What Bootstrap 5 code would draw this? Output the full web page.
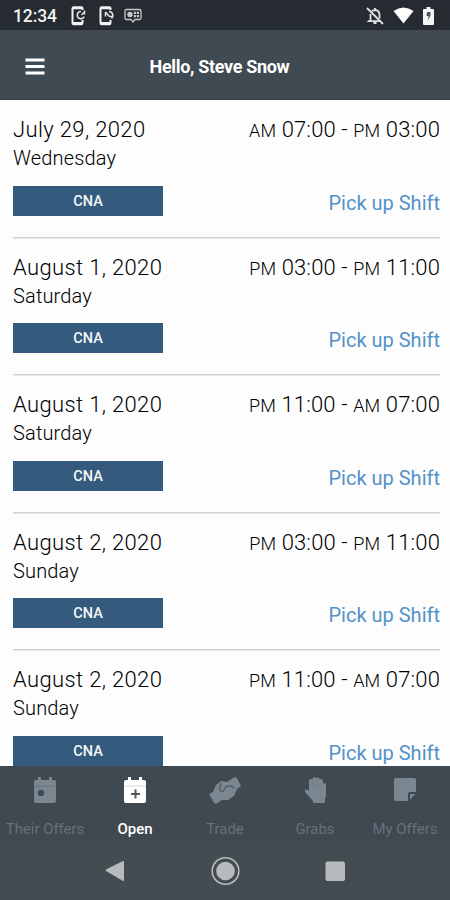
<!DOCTYPE html>
<html lang="en">
<head>
<meta charset="utf-8">
<meta name="viewport" content="width=device-width, initial-scale=1">
<title>Open Shifts</title>
<link href="https://cdn.jsdelivr.net/npm/bootstrap@5.3.0/dist/css/bootstrap.min.css" rel="stylesheet">
<style>
body{font-family:Roboto,"Liberation Sans",sans-serif;background:#fdfdfd;color:#222;height:900px;overflow:hidden}
svg{flex-shrink:0}
.status-bar{height:30px;background:#262b31;color:#f1f2f3;padding:1px 16px 0 13px}
.clock{font-size:17.5px;font-weight:500;letter-spacing:-.1px;line-height:30px;width:58px}
.note-icons{gap:12.5px}
.note-icons svg:last-child{margin-left:-2px}
.state-icons{gap:9px}
.app-bar{height:70px;background:#404a52;color:#fff;border-bottom:1px solid #394148;padding:3px 36px 0 25px}
.app-title{font-size:18px;font-weight:700;letter-spacing:-.33px}
.bar-side{width:20px}
.shift-list{height:666px;padding:0 10px 0 13px}
.shift{height:137.5px;padding-top:15.4px;border-bottom:1.5px solid #cfcfcf;box-shadow:0 1px 0 #e9e9e9}
.shift-date,.shift-time{font-size:22px;line-height:30px;font-weight:300;color:#000;white-space:nowrap}
.shift-date{letter-spacing:.36px}
.shift-time{letter-spacing:.15px}
.shift-time small{font-size:18px;font-weight:300;line-height:1}
.shift-day{font-size:20px;line-height:26px;font-weight:300;color:#000;letter-spacing:.15px}
.role-btn,.role-btn:hover{width:150px;height:30px;margin-top:14.6px;padding-top:1px!important;background:#345b7d;color:#f4f6f8;font-size:14.5px;font-weight:500}
.pick-link{font-size:20px;color:#5492c9;line-height:30px;margin-top:42.6px}
.tab-strip{height:75px;background:#404850;color:#65717b}
.tab-item{width:90px;font-size:15px;letter-spacing:-.05px;color:inherit;padding-top:10px;white-space:nowrap}
.tab-item span{line-height:20px;margin-top:13px}
.tab-item svg{color:#7a8791}
.tab-item.current,.tab-item.current svg{color:#fff}
.tab-item.current{font-weight:500}
.system-nav{height:59px;background:#444c52;padding:0 60px}
.system-nav svg{width:110px}
</style>
<script src="https://cdn.jsdelivr.net/npm/bootstrap@5.3.0/dist/js/bootstrap.bundle.min.js"></script>
</head>
<body class="d-flex flex-column">
<div class="status-bar d-flex align-items-center">
  <div class="clock">12:34</div>
  <div class="note-icons d-flex align-items-center">
    <svg width="15" height="20" viewBox="0 0 15 20"><path d="M11.500 4V2.500Q11.500 1.200 10.200 1.200H2.800Q1.500 1.200 1.500 2.500v14.500q0 1.300 1.300 1.300h7.400q1.300 0 1.300-1.300V14M2 2.200h9M2 17h9" fill="none" stroke="#f1f2f3" stroke-width="2"/><path d="M10 5.500a3.600 3.600 0 1 0 3.200 5M10.500 9l3-3M13.500 4.500v4" fill="none" stroke="#e4e6e8" stroke-width="1.500"/></svg>
    <svg width="15" height="20" viewBox="0 0 15 20"><path d="M11.500 4V2.500Q11.500 1.200 10.200 1.200H2.800Q1.500 1.200 1.500 2.500v14.500q0 1.300 1.300 1.300h7.400q1.300 0 1.300-1.300V14M2 2.200h9M2 17h9" fill="none" stroke="#f1f2f3" stroke-width="2"/><path d="M6.500 10.500V6M6.500 6l4 4.500h3M10 5.500a4 4 0 0 1 2.500 7" fill="none" stroke="#e4e6e8" stroke-width="1.500"/></svg>
    <svg width="18" height="16" viewBox="0 0 18 16"><path d="M2.500 1.500h13q1.500 0 1.500 1.500v7q0 1.500-1.500 1.500H11L9 14l-2-2.500H2.500Q1 11.500 1 10V3q0-1.500 1.500-1.500z" fill="none" stroke="#c6c9cc" stroke-width="1.300"/><circle cx="6" cy="6.500" r="2.700" fill="#c6c9cc"/><path d="M9.800 3.800h2.200v2.300H9.800zm3 0H15v2.300h-2.200zm-3 3.200h2.200v2.300H9.800zm3 0H15v2.300h-2.200z" fill="#c6c9cc"/></svg>
  </div>
  <div class="state-icons d-flex align-items-center ms-auto">
    <svg width="18" height="18" viewBox="0 0 18 18" fill="none" stroke="#dfe1e3" stroke-width="1.800"><path d="M6 4.200Q7 3 9 3q4.500.3 4.500 5v3.500M4.500 7v6L3 14.200h10.500M9 1v2"/><path d="M7.500 16h3M1 1l16 16"/></svg>
    <svg width="21" height="17" viewBox="0 0 21 17"><path d="M.5 4Q10.500-3 20.500 4l-10 12.500z" fill="#fff"/></svg>
    <svg width="11" height="18" viewBox="0 0 11 18"><path d="M3.500 0h4v2H10q1 0 1 1v14q0 1-1 1H1q-1 0-1-1V3q0-1 1-1h2.500z" fill="#f4f4f4"/><path d="M7 5H4L3.500 9H5.500L4.800 13.500 7.500 8.500V5z" fill="#50555a"/></svg>
  </div>
</div>
<nav class="app-bar d-flex align-items-center justify-content-between">
  <button class="btn p-0 border-0 d-flex bar-side" aria-label="Menu"><svg width="20" height="17" viewBox="0 0 20 17"><path d="M.5 2h19M.5 8.500h19M.5 15h19" stroke="#fff" stroke-width="3"/></svg></button>
  <div class="app-title">Hello, Steve Snow</div>
  <div class="bar-side"></div>
</nav>
<main class="shift-list overflow-hidden">
  <article class="shift d-flex justify-content-between">
    <div><div class="shift-date">July 29, 2020</div><div class="shift-day">Wednesday</div><button class="role-btn btn rounded-0 border-0 p-0 d-block">CNA</button></div>
    <div class="text-end"><div class="shift-time"><small>AM</small> 07:00 - <small>PM</small> 03:00</div><a href="#" class="pick-link d-block text-decoration-none">Pick up Shift</a></div>
  </article>
  <article class="shift d-flex justify-content-between">
    <div><div class="shift-date">August 1, 2020</div><div class="shift-day">Saturday</div><button class="role-btn btn rounded-0 border-0 p-0 d-block">CNA</button></div>
    <div class="text-end"><div class="shift-time"><small>PM</small> 03:00 - <small>PM</small> 11:00</div><a href="#" class="pick-link d-block text-decoration-none">Pick up Shift</a></div>
  </article>
  <article class="shift d-flex justify-content-between">
    <div><div class="shift-date">August 1, 2020</div><div class="shift-day">Saturday</div><button class="role-btn btn rounded-0 border-0 p-0 d-block">CNA</button></div>
    <div class="text-end"><div class="shift-time"><small>PM</small> 11:00 - <small>AM</small> 07:00</div><a href="#" class="pick-link d-block text-decoration-none">Pick up Shift</a></div>
  </article>
  <article class="shift d-flex justify-content-between">
    <div><div class="shift-date">August 2, 2020</div><div class="shift-day">Sunday</div><button class="role-btn btn rounded-0 border-0 p-0 d-block">CNA</button></div>
    <div class="text-end"><div class="shift-time"><small>PM</small> 03:00 - <small>PM</small> 11:00</div><a href="#" class="pick-link d-block text-decoration-none">Pick up Shift</a></div>
  </article>
  <article class="shift d-flex justify-content-between">
    <div><div class="shift-date">August 2, 2020</div><div class="shift-day">Sunday</div><button class="role-btn btn rounded-0 border-0 p-0 d-block">CNA</button></div>
    <div class="text-end"><div class="shift-time"><small>PM</small> 11:00 - <small>AM</small> 07:00</div><a href="#" class="pick-link d-block text-decoration-none">Pick up Shift</a></div>
  </article>
</main>
<nav class="tab-strip d-flex">
  <a href="#" class="tab-item d-flex flex-column align-items-center text-decoration-none"><svg width="24" height="30" viewBox="0 0 24 30"><path d="M5 1h3v3h8V1h3v3h2q2 0 2 2v19q0 2-2 2H3q-2 0-2-2V6q0-2 2-2h2z" fill="currentColor"/><path d="M1 10h22" stroke="#66737d"/><rect x="5" y="14" width="6" height="6" rx="2" fill="#404850"/></svg><span>Their Offers</span></a>
  <a href="#" class="tab-item current d-flex flex-column align-items-center text-decoration-none"><svg width="24" height="30" viewBox="0 0 24 30"><path d="M5 1h3v3h8V1h3v3h2q2 0 2 2v19q0 2-2 2H3q-2 0-2-2V6q0-2 2-2h2z" fill="currentColor"/><path d="M1 10h22" stroke="#d5d7d9"/><path d="M12.500 13.500v9M8 18h9" stroke="#50575d" stroke-width="2"/></svg><span>Open</span></a>
  <a href="#" class="tab-item d-flex flex-column align-items-center text-decoration-none"><svg width="34" height="30" viewBox="0 0 34 30"><path d="M1 18l4-2 3-7 5-4 6 1 8-5 2 1 4 8-4 3-3 7-6 4-6 0-6 4-2-1z" fill="currentColor"/><path d="M13 7l-1.500 6q1.500 4 4 2l2-4q4-2 7-.5l2 2" fill="none" stroke="#4d5861" stroke-width="1.200"/></svg><span>Trade</span></a>
  <a href="#" class="tab-item d-flex flex-column align-items-center text-decoration-none"><svg width="24" height="30" viewBox="0 0 24 30"><path d="M6 15V5q0-2 1.700-2T9.700 3q0-2 1.800-2T13.300 2.500Q13.500 1.500 15 1.500t1.800 2Q17.300 3 18.500 3t1.500 2v3q.5-1 1.800-1T23 8.500V20l-1 3v4H10v-2l-8-9q-1-2 1.500-2.500 1.500 0 2.500 1.500z" fill="currentColor"/><path d="M9.700 4v7M13.300 3v8M16.800 4v7" stroke="#707d87" stroke-width=".5"/></svg><span>Grabs</span></a>
  <a href="#" class="tab-item d-flex flex-column align-items-center text-decoration-none"><svg width="24" height="30" viewBox="0 0 24 30"><path d="M3 2h18q2 0 2 2v12h-6q-2 0-2 2v7H3q-2 0-2-2V4q0-2 2-2z" fill="currentColor"/><path d="M17 18h5.500L17 23.500z" fill="currentColor"/></svg><span>My Offers</span></a>
</nav>
<footer class="system-nav d-flex align-items-center">
  <svg height="30" viewBox="0 0 110 30"><path d="M46 15q-.8-.7 0-1.400L63 5q1-.3 1 .8v18.400q0 1.100-1 .8z" fill="#b6bcbe"/></svg>
  <svg height="30" viewBox="0 0 110 30"><circle cx="55.500" cy="15" r="13.300" fill="none" stroke="#b6bcbe" stroke-width="1.600"/><circle cx="55.500" cy="15" r="9.300" fill="#b6bcbe"/></svg>
  <svg height="30" viewBox="0 0 110 30"><rect x="45.500" y="5.500" width="19.500" height="19.500" rx="2" fill="#b6bcbe"/></svg>
</footer>
</body>
</html>
